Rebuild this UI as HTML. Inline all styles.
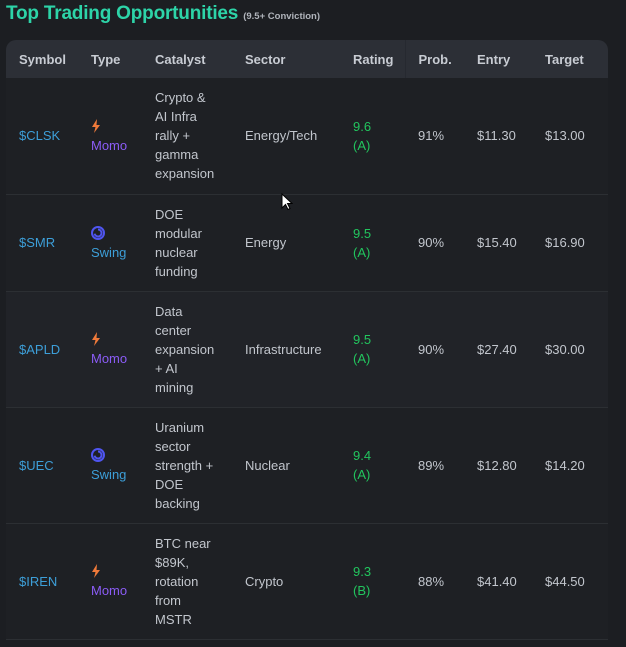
<!DOCTYPE html>
<html><head><meta charset="utf-8"><style>
*{margin:0;padding:0;box-sizing:border-box}
body{width:626px;height:647px;background:#1c1e22;font-family:"Liberation Sans",Arial,sans-serif;overflow:hidden;position:relative}
h1{position:absolute;left:6px;top:3px;color:#2dd4a8;font-size:19px;font-weight:bold;letter-spacing:-0.2px}
h1 small{font-size:9.5px;color:#b0b4bb;font-weight:bold;letter-spacing:0}
table{position:absolute;left:6px;top:40px;width:602px;border-collapse:collapse;font-size:13px;color:#c2c6cd;table-layout:fixed}
thead tr{background:#2c2f36}
th{height:38px;text-align:left;padding-left:13px;font-weight:bold;color:#c8ccd3;font-size:13px}
th:first-child{border-top-left-radius:10px}
th:last-child{border-top-right-radius:10px}
th.div{border-left:1px solid #262930}
td{padding-left:13px;line-height:19px;border-bottom:1px solid #2c2f33;vertical-align:middle}
td.cat{padding-right:13px}
tbody tr{background:#1e2024}
tbody tr.alt{background:#212328}
.sym{color:#3d9fd9}
.g{color:#22c55e}
.momo{color:#8b5cf6}
.swing{color:#3d9fd9}
.ic{display:block;height:19px;padding-top:2px}
</style></head><body>
<h1>Top Trading Opportunities <small>(9.5+ Conviction)</small></h1>
<table>
<colgroup><col style="width:72px"><col style="width:64px"><col style="width:90px"><col style="width:108px"><col style="width:65px"><col style="width:59px"><col style="width:68px"><col style="width:76px"></colgroup>
<thead><tr><th>Symbol</th><th>Type</th><th>Catalyst</th><th>Sector</th><th>Rating</th><th class="div">Prob.</th><th>Entry</th><th>Target</th></tr></thead>
<tbody>
<tr style="height:116px"><td class="sym">$CLSK</td><td><span class="ic"><svg width="10" height="14" viewBox="0 0 10 14"><path d="M6 0L1 8h3.5L3 14l6-8H5.5z" fill="#f07a3a"/></svg></span><span class="momo">Momo</span></td><td class="cat">Crypto &amp;<br>AI Infra<br>rally +<br>gamma<br>expansion</td><td>Energy/Tech</td><td class="g">9.6<br>(A)</td><td>91%</td><td>$11.30</td><td>$13.00</td></tr>
<tr style="height:97px"><td class="sym">$SMR</td><td><span class="ic"><svg width="14" height="14" viewBox="0 0 14 14"><circle cx="7" cy="7" r="6" fill="none" stroke="#4f55f0" stroke-width="2"/><path d="M7 3.5a3.5 3.5 0 1 1-3.4 4.2" fill="none" stroke="#4f55f0" stroke-width="2"/></svg></span><span class="swing">Swing</span></td><td class="cat">DOE<br>modular<br>nuclear<br>funding</td><td>Energy</td><td class="g">9.5<br>(A)</td><td>90%</td><td>$15.40</td><td>$16.90</td></tr>
<tr class="alt" style="height:116px"><td class="sym">$APLD</td><td><span class="ic"><svg width="10" height="14" viewBox="0 0 10 14"><path d="M6 0L1 8h3.5L3 14l6-8H5.5z" fill="#f07a3a"/></svg></span><span class="momo">Momo</span></td><td class="cat">Data<br>center<br>expansion<br>+ AI<br>mining</td><td>Infrastructure</td><td class="g">9.5<br>(A)</td><td>90%</td><td>$27.40</td><td>$30.00</td></tr>
<tr style="height:116px"><td class="sym">$UEC</td><td><span class="ic"><svg width="14" height="14" viewBox="0 0 14 14"><circle cx="7" cy="7" r="6" fill="none" stroke="#4f55f0" stroke-width="2"/><path d="M7 3.5a3.5 3.5 0 1 1-3.4 4.2" fill="none" stroke="#4f55f0" stroke-width="2"/></svg></span><span class="swing">Swing</span></td><td class="cat">Uranium<br>sector<br>strength +<br>DOE<br>backing</td><td>Nuclear</td><td class="g">9.4<br>(A)</td><td>89%</td><td>$12.80</td><td>$14.20</td></tr>
<tr style="height:116px"><td class="sym">$IREN</td><td><span class="ic"><svg width="10" height="14" viewBox="0 0 10 14"><path d="M6 0L1 8h3.5L3 14l6-8H5.5z" fill="#f07a3a"/></svg></span><span class="momo">Momo</span></td><td class="cat">BTC near<br>$89K,<br>rotation<br>from<br>MSTR</td><td>Crypto</td><td class="g">9.3<br>(B)</td><td>88%</td><td>$41.40</td><td>$44.50</td></tr>
</tbody></table>
<svg style="position:absolute;left:281px;top:193px" width="12" height="18" viewBox="0 0 12 18"><path d="M1 1v14l3.5-3.5 2.5 5 2-1-2.5-5H11z" fill="#fff" stroke="#000" stroke-width="1"/></svg>
</body></html>
